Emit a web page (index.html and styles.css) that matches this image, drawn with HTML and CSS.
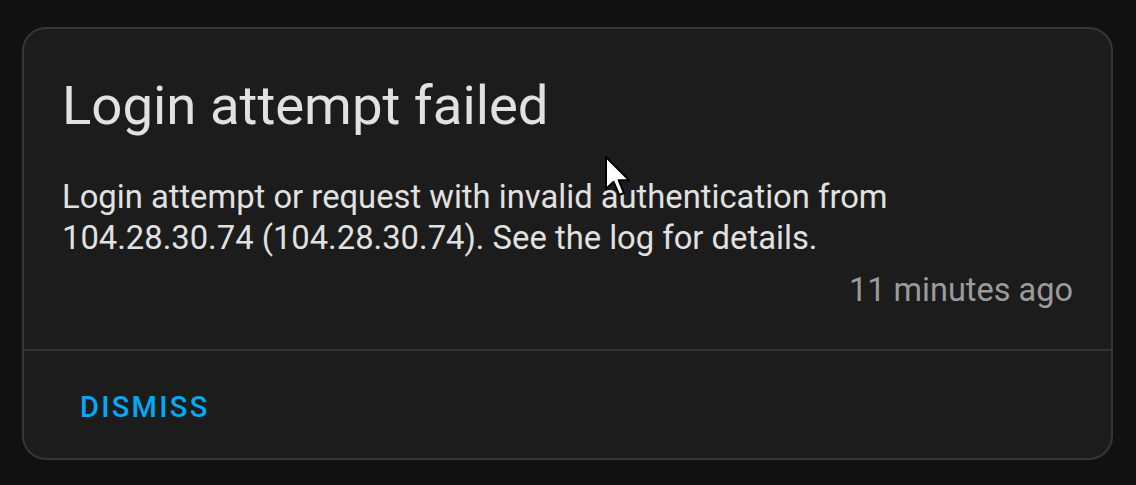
FILE: index.html
```html
<!DOCTYPE html>
<html>
<head>
<meta charset="utf-8">
<link rel="stylesheet" href="styles.css">
</head>
<body>
<div class="card">
  <div class="content">
    <h1 class="title">Login attempt failed</h1>
    <p class="message">Login attempt or request with invalid authentication from 104.28.30.74 (104.28.30.74). See the log for details.</p>
    <div class="time">11 minutes ago</div>
  </div>
  <div class="actions">
    <button class="btn">DISMISS</button>
  </div>
</div>
<svg class="cursor" width="30" height="46" viewBox="0 0 15 23">
  <path d="M1 1 L1 17 L4.8 13.4 L7.6 20 L10 19 L7.3 12.6 L12.6 12.6 Z" fill="#fff" stroke="#000" stroke-width="1" stroke-linejoin="round"/>
</svg>
</body>
</html>
```
FILE: styles.css
```css
html, body {
  margin: 0;
  padding: 0;
  background: #111111;
  height: 100%;
  overflow: hidden;
}
body {
  font-family: Roboto, "Liberation Sans", sans-serif;
  padding: 27px 23px 0 22px;
  box-sizing: border-box;
}
.card {
  background: #1c1c1c;
  border: 2px solid #363636;
  border-radius: 24px;
  height: 433px;
  box-sizing: border-box;
  display: flex;
  flex-direction: column;
}
.content {
  padding: 44px 38px 0 38px;
  height: 322px;
  box-sizing: border-box;
  border-bottom: 2px solid #333333;
}
.title {
  margin: 0;
  font-weight: 400;
  font-size: 54.5px;
  line-height: 64px;
  color: #e1e1e1;
}
.message {
  margin: 40px 0 0 0;
  font-size: 32.75px;
  line-height: 41px;
  color: #e1e1e1;
}
.time {
  text-align: right;
  font-size: 32.5px;
  line-height: 41px;
  color: #9b9b9b;
  margin-top: 11px;
}
.actions {
  padding: 27px 16px 0 16px;
  display: flex;
}
.btn {
  background: none;
  border: none;
  font-family: Roboto, "Liberation Sans", sans-serif;
  font-weight: 500;
  font-size: 29px;
  letter-spacing: 2.3px;
  color: #03a9f4;
  padding: 12px 40px;
  border-radius: 8px;
}
.cursor {
  position: absolute;
  left: 604px;
  top: 155px;
}
```
